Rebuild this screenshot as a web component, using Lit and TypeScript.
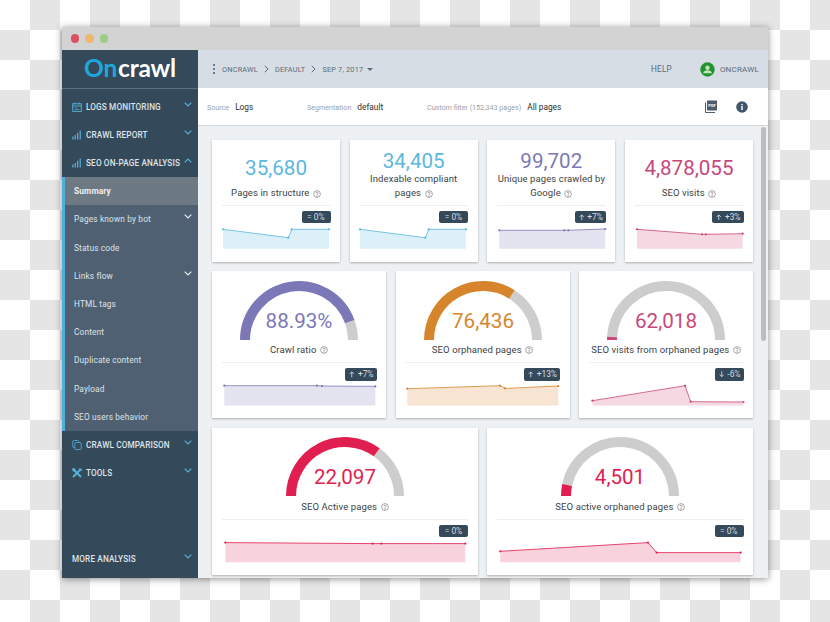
import { LitElement, html, css, svg } from "lit";
import { customElement } from "lit/decorators.js";

type Pt = [number, number];
interface Kpi { value: string; label: string[]; color: string; area: string; badge: string; pts: Pt[]; base: number; width: number; frac?: number; }

const BLUE = "#5bb8de", BLUEA = "#dcf0f9", PURP = "#7c78b8", PURPA = "#e4e3f0", ROSE = "#c9477a", ROSEA = "#f6d8e2",
  ORG = "#d6852c", ORGA = "#f7e4d3", RED = "#e01e50", REDA = "#f8d2dc";

const row1: Kpi[] = [
  { value: "35,680", label: ["Pages in structure"], color: BLUE, area: BLUEA, badge: "= 0%", base: 42.7, width: 110, pts: [[1, 23.3], [66.3, 31.7], [69.7, 23.3], [107, 23.3]] },
  { value: "34,405", label: ["Indexable compliant", "pages"], color: BLUE, area: BLUEA, badge: "= 0%", base: 42.7, width: 110, pts: [[1, 23.3], [66.3, 31.7], [69.7, 23.3], [107, 23.3]] },
  { value: "99,702", label: ["Unique pages crawled by", "Google"], color: PURP, area: PURPA, badge: "↑ +7%", base: 42.7, width: 110, pts: [[2.3, 24.3], [67.3, 24.3], [71.3, 24.3], [108.3, 23]] },
  { value: "4,878,055", label: ["SEO visits"], color: ROSE, area: ROSEA, badge: "↑ +3%", base: 42.7, width: 110, pts: [[3, 23.3], [68, 28.3], [71.7, 28.3], [108.7, 27.7]] },
];
const row2: Kpi[] = [
  { value: "88.93%", label: ["Crawl ratio"], color: PURP, area: PURPA, badge: "↑ +7%", frac: 0.8893, base: 42.4, width: 155, pts: [[2.3, 22.7], [95, 22.7], [100, 23], [153.3, 23.4]] },
  { value: "76,436", label: ["SEO orphaned pages"], color: ORG, area: ORGA, badge: "↑ +13%", frac: 0.68, base: 42.4, width: 155, pts: [[2.3, 25.7], [95, 22.7], [100, 25.4], [153.3, 23]] },
  { value: "62,018", label: ["SEO visits from orphaned pages"], color: ROSE, area: ROSEA, badge: "↓ -6%", frac: 0.018, base: 42.4, width: 155, pts: [[3.4, 37.7], [96, 22.7], [101.7, 38.7], [154.4, 39]] },
];
const row3: Kpi[] = [
  { value: "22,097", label: ["SEO Active pages"], color: RED, area: REDA, badge: "= 0%", frac: 0.7, base: 42.3, width: 247, pts: [[3.3, 22.6], [150.6, 23.6], [159.3, 23.6], [243.3, 23.6]] },
  { value: "4,501", label: ["SEO active orphaned pages"], color: RED, area: REDA, badge: "= 0%", frac: 0.065, base: 42.3, width: 247, pts: [[3.3, 31.3], [151, 22.6], [159.6, 32.6], [243.6, 32.6]] },
];

const chevron = (up = false, cls = "chev") => html`<svg class=${cls} viewBox="0 0 8 5" width="8" height="5">
  <path d=${up ? "M.7 4.3 4 1l3.3 3.3" : "M.7.7 4 4 7.3.7"} fill="none" stroke="currentColor" stroke-width="1.2"/></svg>`;

const arrow = (up: boolean) => html`<svg class="arr" viewBox="0 0 6 7" width="5.500" height="6.500" fill="none" stroke="currentColor" stroke-width=".9">
  <path d=${up ? "M3 6.800V.9M.7 3.200 3 .9l2.300 2.300" : "M3 .2v5.900M.7 3.800 3 6.100l2.300-2.300"}/></svg>`;

const icons: Record<string, unknown> = {
  cal: html`<svg class="ico" viewBox="0 0 10 10" width="10" height="10" fill="none" stroke="currentColor" stroke-width=".9"><rect x=".7" y="1.8" width="8.6" height="7.6"/><path d="M.7 4h8.6M3 .4v2M7 .4v2"/><path d="M2.500 6h3M2.500 7.600h5" stroke-width=".7"/></svg>`,
  bars: html`<svg class="ico" viewBox="0 0 10 10" width="10" height="10" fill="currentColor"><rect x=".3" y="6.5" width="1.2" height="3"/><rect x="2.6" y="5" width="1.2" height="4.5"/><rect x="5" y="2.8" width="1.2" height="6.7"/><rect x="7.6" y=".5" width="1.2" height="9"/></svg>`,
  copy: html`<svg class="ico" viewBox="0 0 10 10" width="10" height="10" fill="none" stroke="currentColor" stroke-width=".8"><rect x="2.800" y="2.500" width="6.400" height="7" rx="1.200"/><path d="M2.800 7.500h-1A1.100 1.100 0 0 1 .7 6.400V2A1.500 1.500 0 0 1 2.200.5h3.400a1 1 0 0 1 1 1v1"/></svg>`,
  tools: html`<svg class="ico" viewBox="0 0 10 10" width="10" height="10" fill="none" stroke="currentColor"><path d="M1.500 1.500 9 9" stroke-width="2"/><path d="M8.500 1.500 1 9" stroke-width="2"/><circle cx="1.800" cy="1.800" r="1.700" fill="currentColor" stroke="none"/><path d="M6.500 .4h3.200v3.200z" fill="currentColor" stroke="none"/></svg>`,
};

const helpIcon = html`<svg class="help" viewBox="0 0 8 8" width="8" height="8" fill="none" stroke="#6d6d6d" stroke-width=".6"><circle cx="4" cy="4" r="3.400"/><path d="M2.900 3.200A1.100 1.100 0 1 1 4.400 4.200C4 4.400 4 4.600 4 5.100"/><circle cx="4" cy="6" r=".25" fill="#6d6d6d"/></svg>`;

@customElement("app-root")
export class AppRoot extends LitElement {
  static styles = css`
    :host {
      display: block; width: 830px; height: 622px; box-sizing: border-box; overflow: hidden;
      padding: 27px 62px 0;
      font-family: Roboto, "Liberation Sans", sans-serif;
      background-color: #fff;
      background-image: conic-gradient(#e5e5e5 25%, #fff 0 50%, #e5e5e5 0 75%, #fff 0);
      background-size: 60px 60px;
    }
    .win { width: 706px; height: 551px; display: flex; flex-direction: column; box-shadow: 0 1px 7px rgba(0,0,0,.45); }
    .title { height: 23px; background: #d3d3d3; display: flex; align-items: center; gap: 6px; padding-left: 8.5px; flex: none; }
    .dot { width: 8.5px; height: 8.5px; border-radius: 50%; }
    .body { flex: 1; display: flex; min-height: 0; }
    .side { width: 136px; flex: none; background: #34495a; display: flex; flex-direction: column; color: #e8ecef; }
    .logo { flex: none; border-bottom: 1px solid #5b6f7f; box-sizing: border-box; height: 39px; display: flex; align-items: center; justify-content: center;
      font: 700 24.500px Lato, sans-serif; letter-spacing: -.2px; color: #fff; line-height: 1; padding-bottom: 2px; }
    .logo b { color: #1ea7dc; font-weight: 700; margin-right: 1px; }
    .nav { flex: 1; display: flex; flex-direction: column; padding-top: 3.6px; }
    .nh { height: 28.2px; flex: none; display: flex; align-items: center; padding: 0 6px 0 9.5px; font-size: 8.2px; font-weight: 500; letter-spacing: .15px; color: #dfe4e8; }
    .nh .ico { color: #58b2d8; margin-right: 4.5px; width: 10px; flex: none; }
    .chev { color: #58b2d8; margin-left: auto; margin-top: -5px; flex: none; }
    .sub { border-left: 3px solid #4fb0d9; background: #4e6071; flex: none; }
    .si { height: 28.2px; display: flex; align-items: center; padding: 0 6px 0 9px; font-size: 8.3px; letter-spacing: .15px; color: #dfe4e8; }
    .si.on { background: #6d7983; font-weight: 700; color: #eef0f2; }
    .si .chev { color: #e8ecef; }
    .more { margin-top: auto; padding-left: 10px; margin-bottom: 4.5px; }
    .main { flex: 1; min-width: 0; display: flex; flex-direction: column; background: #eef1f4; position: relative; }
    .hdr { height: 38px; flex: none; background: #d6dde5; display: flex; align-items: center; font-size: 7.3px; letter-spacing: .2px; color: #5c6a77; padding-left: 14.5px; }
    .vdots { display: flex; flex-direction: column; gap: 1.6px; margin-right: 7px; }
    .vdots i { width: 2.6px; height: 2.6px; border-radius: 50%; background: #4b5a68; display: block; }
    .crumb { margin: 0 6px; }
    .caret { width: 0; height: 0; border: 3.4px solid transparent; border-top-color: #5c6a77; border-bottom: 0; margin-left: 4px; }
    .hright { margin-left: auto; display: flex; align-items: center; padding-right: 9px; font-size: 8px; }
    .help-t { margin-right: 28px; font-size: 8.2px; }
    .avatar { margin-right: 5px; display: block; }
    .filters { height: 38px; flex: none; background: #fff; border-bottom: 1px solid #d3d6d9; box-sizing: border-box; display: flex; align-items: center; padding-left: 9px; font-size: 8.3px; color: #2c2c2c; }
    .filters span.k { color: #9b9fa3; font-size: 7.15px; margin-right: 6px; }
    .f1 { width: 100px; } .f2 { width: 120px; }
    .ficons { margin-left: auto; display: flex; align-items: center; gap: 19px; padding-right: 20px; }
    .ficons svg { display: block; }
    .ficons text { font: 700 4px Roboto, sans-serif; fill: #fff; text-anchor: middle; }
    .content { flex: 1; min-height: 0; overflow: hidden; padding: 13.7px 15px 0 14px; display: flex; flex-direction: column; gap: 9.5px; }
    .row { display: flex; gap: 9.5px; flex: none; }
    .r1 { height: 122px; } .r2 { height: 147px; }
    .card { flex: 1 1 0; min-width: 0; background: #fff; box-shadow: 0 1px 2px rgba(0,0,0,.28); display: flex; flex-direction: column; padding: 10px 9.5px 0; box-sizing: border-box; }
    .r2 .card { padding-top: 9.5px; }
    .kv { flex: 1; display: flex; align-items: center; justify-content: center; font-size: 20.6px; line-height: 1; }
    .lb { text-align: center; font-size: 9.5px; line-height: 14px; color: #3c3f43; letter-spacing: .1px; white-space: nowrap; }
    .help { vertical-align: -1.2px; margin-left: 3.5px; }
    .sep { border-top: 1px solid #eceef0; flex: none; position: relative; }
    .r1 .sep { margin-top: 4.3px; }
    .r2 .sep { margin-top: 5px; }
    .gauge { display: block; margin: 0 auto 3.5px; flex: none; overflow: visible; }
    .gauge text { font-size: 20.6px; text-anchor: middle; font-family: Roboto, sans-serif; }
    .chart { display: block; flex: none; overflow: visible; }
    .badge { position: absolute; right: 0; top: 5px; height: 12.4px; box-sizing: border-box; padding: 0 3px 0 4px; display: flex; align-items: center; justify-content: flex-end; gap: 3px;
      background: #34495a; color: #d9dfe4; border-radius: 2px; font-size: 8.4px; white-space: nowrap; }
    .badge.flat { min-width: 29px; padding: 0 6px 0 4px; }
    .arr { display: block; }
    .scroll { position: absolute; right: 2px; top: 77px; width: 5.5px; height: 214px; background: #bdbdbd; border-radius: 3px; }
  `;

  private spark(k: Kpi) {
    const line = k.pts.map((p) => p.join(",")).join(" ");
    const x0 = k.pts[0][0], x1 = k.pts[k.pts.length - 1][0];
    const area = `${x0},${k.base} ${line} ${x1},${k.base}`;
    return html`<svg class="chart" width=${k.width} height="56">
      <polygon points=${area} fill=${k.area}></polygon>
      <polyline points=${line} fill="none" stroke=${k.color} stroke-width=".8"></polyline>
      ${k.pts.map((p) => svg`<circle cx=${p[0]} cy=${p[1]} r="1.1" fill=${k.color}></circle>`)}
    </svg>`;
  }

  private bottom(k: Kpi) {
    const m = k.badge.match(/^([↑↓])\s(.*)$/);
    return html`<div class="sep">${m
      ? html`<span class="badge">${arrow(m[1] === "↑")}<span>${m[2]}</span></span>`
      : html`<span class="badge flat">${k.badge}</span>`}</div>${this.spark(k)}`;
  }

  private label(k: Kpi) {
    return html`<div class="lb">${k.label.map((l, i) => html`${i ? html`<br />` : ""}${l}`)}${helpIcon}</div>`;
  }

  private gauge(k: Kpi) {
    const r = 54, c = 59, f = k.frac ?? 0;
    const a = Math.PI * (1 - f);
    const ex = c + r * Math.cos(a), ey = c - r * Math.sin(a);
    return html`<svg class="gauge" width="118" height="59" viewBox="0 0 118 59">
      <path d="M${ex} ${ey}A${r} ${r} 0 0 1 ${c + r} ${c}" fill="none" stroke="#cdcdcd" stroke-width="10"></path>
      <path d="M${c - r} ${c}A${r} ${r} 0 0 1 ${ex} ${ey}" fill="none" stroke=${k.color} stroke-width="10"></path>
      <text x="59" y="47" fill=${k.color}>${k.value}</text>
    </svg>`;
  }

  private kpiCard(k: Kpi) {
    return html`<div class="card"><div class="kv" style="color:${k.color}">${k.value}</div>${this.label(k)}${this.bottom(k)}</div>`;
  }
  private gaugeCard(k: Kpi) {
    return html`<div class="card">${this.gauge(k)}${this.label(k)}${this.bottom(k)}</div>`;
  }

  render() {
    const subs: [string, boolean][] = [["Pages known by bot", true], ["Status code", false], ["Links flow", true], ["HTML tags", false], ["Content", false], ["Duplicate content", false], ["Payload", false], ["SEO users behavior", false]];
    return html`<div class="win">
      <div class="title">
        <span class="dot" style="background:#dc5062"></span>
        <span class="dot" style="background:#edb76e"></span>
        <span class="dot" style="background:#9ccd83"></span>
      </div>
      <div class="body">
        <aside class="side">
          <div class="logo"><b>On</b>crawl</div>
          <nav class="nav">
            <div class="nh">${icons.cal}LOGS MONITORING${chevron()}</div>
            <div class="nh">${icons.bars}CRAWL REPORT${chevron()}</div>
            <div class="nh">${icons.bars}SEO ON-PAGE ANALYSIS${chevron(true)}</div>
            <div class="sub">
              <div class="si on">Summary</div>
              ${subs.map(([t, c]) => html`<div class="si">${t}${c ? chevron() : ""}</div>`)}
            </div>
            <div class="nh">${icons.copy}CRAWL COMPARISON${chevron()}</div>
            <div class="nh">${icons.tools}TOOLS${chevron()}</div>
            <div class="nh more">MORE ANALYSIS${chevron()}</div>
          </nav>
        </aside>
        <section class="main">
          <div class="hdr">
            <span class="vdots"><i></i><i></i><i></i></span>
            <span>ONCRAWL</span>
            <svg class="crumb" width="5" height="8" viewBox="0 0 5 8"><path d="M.8.8 4 4 .8 7.200" fill="none" stroke="#5c6a77" stroke-width="1"/></svg>
            <span>DEFAULT</span>
            <svg class="crumb" width="5" height="8" viewBox="0 0 5 8"><path d="M.8.8 4 4 .8 7.200" fill="none" stroke="#5c6a77" stroke-width="1"/></svg>
            <span>SEP 7, 2017</span>
            <span class="caret"></span>
            <div class="hright">
              <span class="help-t">HELP</span>
              <svg class="avatar" width="15" height="15" viewBox="0 0 15 15"><circle cx="7.500" cy="7.500" r="7.200" fill="#23922f"/><circle cx="7.500" cy="5.800" r="2.200" fill="#bfe6b8"/><path d="M3 11.200c.6-2.200 2.300-3 4.500-3s3.900.8 4.500 3z" fill="#bfe6b8"/></svg>
              <span>ONCRAWL</span>
            </div>
          </div>
          <div class="filters">
            <div class="f1"><span class="k">Source</span>Logs</div>
            <div class="f2"><span class="k">Segmentation</span>default</div>
            <div><span class="k">Custom filter (152,343 pages)</span>All pages</div>
            <div class="ficons">
              <svg width="12" height="13" viewBox="0 0 12 13"><path d="M.5 2.500v10h9.500" fill="none" stroke="#4e5c69" stroke-width="1"/><rect x="2" y=".5" width="10" height="10" fill="#4e5c69"/><text x="7" y="7">PDF</text></svg>
              <svg width="12" height="12" viewBox="0 0 12 12"><circle cx="6" cy="6" r="5.800" fill="#40566a"/><rect x="5.300" y="5" width="1.400" height="4" fill="#fff"/><rect x="5.300" y="3" width="1.400" height="1.300" fill="#fff"/></svg>
            </div>
          </div>
          <div class="content">
            <div class="row r1">${row1.map((k) => this.kpiCard(k))}</div>
            <div class="row r2">${row2.map((k) => this.gaugeCard(k))}</div>
            <div class="row r2">${row3.map((k) => this.gaugeCard(k))}</div>
          </div>
          <div class="scroll"></div>
        </section>
      </div>
    </div>`;
  }
}
